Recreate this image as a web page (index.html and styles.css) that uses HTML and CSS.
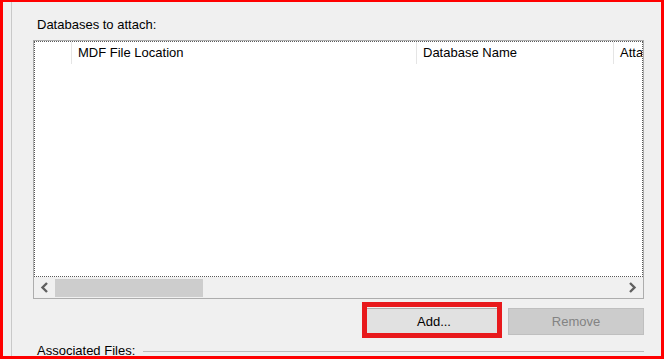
FILE: index.html
```html
<!DOCTYPE html>
<html>
<head>
<meta charset="utf-8">
<link rel="stylesheet" href="styles.css">
</head>
<body>
<div class="frame">
  <div class="panel">
    <div class="label">Databases to attach:</div>
    <div class="listbox">
      <div class="client">
        <div class="header">
          <div class="col c0"></div>
          <div class="col c1">MDF File Location</div>
          <div class="col c2">Database Name</div>
          <div class="col c3">Attach As</div>
        </div>
      </div>
      <div class="hscroll">
        <div class="arrow">
          <svg width="21" height="21" viewBox="0 0 21 21"><path d="M13 6 L8.5 10.5 L13 15" fill="none" stroke="#606060" stroke-width="2.4"/></svg>
        </div>
        <div class="track"><div class="thumb"></div></div>
        <div class="arrow">
          <svg width="21" height="21" viewBox="0 0 21 21"><path d="M8 6 L12.5 10.5 L8 15" fill="none" stroke="#606060" stroke-width="2.4"/></svg>
        </div>
      </div>
    </div>
    <div class="buttons">
      <div class="btn-wrap">
        <div class="btn">Add...</div>
        <span class="highlight"></span>
      </div>
      <div class="btn disabled">Remove</div>
    </div>
    <div class="group">
      <span class="group-title">Associated Files:</span>
      <span class="rule"></span>
    </div>
  </div>
</div>
</body>
</html>
```

FILE: styles.css
```css
html, body {
  margin: 0;
  padding: 0;
  background: #f0f0f0;
}
body {
  width: 664px;
  height: 359px;
  overflow: hidden;
  font-family: "Liberation Sans", Arial, sans-serif;
  font-size: 13px;
  color: #000;
}
.frame {
  box-sizing: border-box;
  width: 664px;
  height: 359px;
  border-style: solid;
  border-color: #ff0000;
  border-width: 2px 3px 3px 3px;
  background: #f0f0f0;
  display: flex;
  overflow: hidden;
}
.panel {
  flex: 1;
  margin-left: 8px;
  border-left: 1px solid #c9c9c9;
  padding: 15px 17px 0 21px;
  display: flex;
  flex-direction: column;
  overflow: hidden;
}
.label {
  line-height: 15px;
  padding-left: 4px;
  height: 15px;
}
.listbox {
  margin-top: 8px;
  box-sizing: border-box;
  width: 611px;
  height: 259px;
  border: 1px solid #adadad;
  background: #fff;
  display: flex;
  flex-direction: column;
}
.client {
  box-sizing: border-box;
  height: 236px;
  border: 1px dotted #5a5a5a;
  overflow: hidden;
}
.header {
  display: flex;
  height: 22px;
  white-space: nowrap;
}
.col {
  box-sizing: border-box;
  height: 22px;
  line-height: 22px;
  padding-left: 6px;
  border-right: 1px solid #e5e5e5;
  overflow: hidden;
  flex: none;
}
.c0 { width: 37px; }
.c1 { width: 345px; }
.c2 { width: 197px; }
.c3 { width: 60px; border-right: none; }
.hscroll {
  height: 21px;
  display: flex;
  background: #f0f0f0;
}
.arrow {
  width: 21px;
  height: 21px;
  flex: none;
}
.arrow svg { display: block; }
.track {
  flex: 1;
  position: relative;
}
.thumb {
  margin-top: 2px;
  width: 148px;
  height: 18px;
  background: #cdcdcd;
}
.buttons {
  margin-top: 9px;
  display: flex;
  justify-content: flex-end;
  gap: 6px;
}
.btn-wrap {
  position: relative;
}
.btn {
  box-sizing: border-box;
  width: 136px;
  height: 27px;
  line-height: 25px;
  text-align: center;
  background: #e1e1e1;
  border: 1px solid #adadad;
  color: #000;
}
.btn.disabled {
  background: #cccccc;
  border-color: #bfbfbf;
  color: #838383;
}
.highlight {
  position: absolute;
  left: -4px;
  top: -6px;
  width: 140px;
  height: 36px;
  box-sizing: border-box;
  border: 5px solid #e8191c;
}
.group {
  margin-top: 8px;
  padding-left: 4px;
  display: flex;
  align-items: center;
  gap: 8px;
  line-height: 15px;
}
.group-title {
  flex: none;
}
.rule {
  flex: 1;
  height: 0;
  border-top: 1px solid #bcbcbc;
  margin-top: 1px;
}
```
